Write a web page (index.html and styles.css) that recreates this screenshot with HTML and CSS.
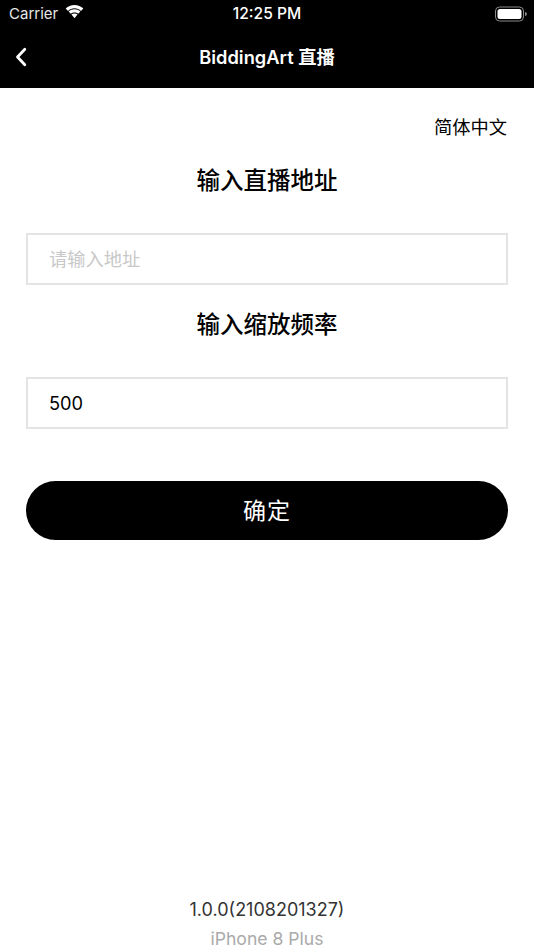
FILE: index.html
```html
<!DOCTYPE html>
<html lang="zh">
<head>
<meta charset="utf-8">
<title>BiddingArt 直播</title>
<link rel="stylesheet" href="styles.css">
</head>
<body>
<div class="screen">
  <header class="top">
    <div class="status">
      <div class="status-left">
        <span class="carrier">Carrier</span>
        <svg class="wifi" width="19" height="15" viewBox="0 0 19 15" aria-hidden="true">
          <path d="M9.500 3.300c2.500 0 4.800 1 6.500 2.600l2.300-2.400C16 1.300 12.900 0 9.500 0S3 1.300.7 3.500L3 5.900c1.700-1.600 4-2.600 6.500-2.600z" fill="#fff"/>
          <path d="M9.500 7.400c1.400 0 2.700.5 3.700 1.400l2.200-2.300C13.800 5 11.800 4.200 9.500 4.200S5.200 5 3.600 6.500l2.200 2.300c1-.9 2.300-1.400 3.700-1.400z" fill="#fff"/>
          <path d="M9.500 8.500c-1.200 0-2.200.4-3 1.100l3 3.600 3-3.600c-.8-.7-1.800-1.100-3-1.100z" fill="#fff"/>
        </svg>
      </div>
      <span class="time">12:25 PM</span>
      <svg class="battery" width="34" height="16" viewBox="0 0 34 16" aria-hidden="true">
        <rect x="1.500" y="1" width="28" height="14" rx="4" fill="none" stroke="#8a8a8a" stroke-width="1"/>
        <rect x="3.500" y="3" width="24" height="10" rx="2.500" fill="#fff"/>
        <path d="M31 6c1.300.3 1.900 1 1.900 2s-.6 1.700-1.900 2z" fill="#8a8a8a"/>
      </svg>
    </div>
    <div class="nav">
      <svg class="back" width="12" height="20" viewBox="0 0 12 20" aria-hidden="true">
        <path d="M9.800 2.200 2.500 10l7.300 7.800" fill="none" stroke="#fff" stroke-width="2.800" stroke-linecap="round" stroke-linejoin="round"/>
      </svg>
      <h1 class="nav-title">BiddingArt 直播</h1>
    </div>
  </header>
  <main class="content">
    <div class="lang">简体中文</div>
    <h2 class="label label-first">输入直播地址</h2>
    <input class="field" type="text" placeholder="请输入地址">
    <h2 class="label label-second">输入缩放频率</h2>
    <input class="field" type="text" value="500">
    <button class="confirm" type="button">确定</button>
  </main>
  <footer class="foot">
    <div class="version">1.0.0(2108201327)</div>
    <div class="device">iPhone 8 Plus</div>
  </footer>
</div>
</body>
</html>
```
FILE: styles.css
```css
* { box-sizing: border-box; }
html, body { margin: 0; padding: 0; }
body {
  width: 534px;
  height: 950px;
  overflow: hidden;
  background: #fff;
  font-family: Inter, "Noto Sans CJK SC", sans-serif;
  color: #000;
}
.screen {
  height: 950px;
  display: flex;
  flex-direction: column;
}
.top {
  background: #000;
  color: #fff;
  height: 88px;
  flex: none;
}
.status {
  height: 27px;
  display: flex;
  align-items: center;
  justify-content: space-between;
  padding: 0 9px;
  position: relative;
}
.status-left {
  display: flex;
  align-items: center;
  gap: 7px;
}
.carrier { font-size: 15px; color: #e8e8e8; }
.wifi { margin-top: -2px; }
.time {
  position: absolute;
  left: 0;
  right: 0;
  text-align: center;
  font-size: 15.600px;
  font-weight: 500;
}
.battery { margin-right: -3px; }
.nav {
  height: 61px;
  position: relative;
  display: flex;
  align-items: center;
  justify-content: center;
}
.back {
  position: absolute;
  left: 15px;
  top: 20px;
}
.nav-title {
  margin: 0 0 2px;
  font-size: 18.300px;
  font-weight: 600;
  line-height: 58px;
  height: 58px;
}
.content {
  flex: 1;
  padding: 0 26px;
  display: flex;
  flex-direction: column;
}
.lang {
  text-align: right;
  font-size: 18.250px;
  line-height: 26px;
  margin-top: 26px;
  padding-right: 1px;
}
.label {
  margin: 0;
  text-align: center;
  font-size: 23.500px;
  font-weight: 500;
  line-height: 32px;
}
.label-first { margin-top: 25px; margin-bottom: 36px; }
.label-second { margin-top: 24px; margin-bottom: 36px; }
.field {
  width: 482px;
  height: 52px;
  border: 2px solid #e4e4e4;
  background: #fff;
  padding: 0 21px;
  font: 18.250px Inter, "Noto Sans CJK SC", sans-serif;
  color: #000;
  outline: none;
  border-radius: 0;
}
.field::placeholder { color: #c8c8c8; opacity: 1; }
.confirm {
  margin-top: 52px;
  width: 482px;
  height: 59px;
  border: 0;
  border-radius: 30px;
  background: #000;
  color: #fff;
  font: 23px Inter, "Noto Sans CJK SC", sans-serif;
  letter-spacing: 1px;
  padding: 0 0 3px;
}
.foot {
  flex: none;
  height: 53px;
  text-align: center;
  font-size: 18px;
}
.version { color: #333; line-height: 26px; height: 29px; }
.device { color: #aaa; line-height: 26px; font-size: 17.600px; }
```
